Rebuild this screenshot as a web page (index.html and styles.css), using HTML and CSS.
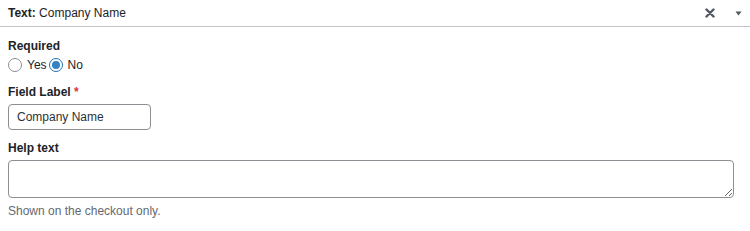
FILE: index.html
```html
<!DOCTYPE html>
<html lang="en">
<head>
    <meta charset="UTF-8">
    <title>Text field settings</title>
    <link rel="stylesheet" href="styles.css">
</head>
<body>
    <div class="field-panel">
        <div class="panel-header">
            <div class="panel-title"><strong>Text:</strong> Company Name</div>
            <div class="panel-actions">
                <span class="icon remove" title="Remove">
                    <svg width="10" height="10" viewBox="0 0 10 10"><path d="M1.5 1.5 L8.5 8.5 M8.5 1.5 L1.5 8.5" stroke="#50575e" stroke-width="2.4" stroke-linecap="round"/></svg>
                </span>
                <span class="icon toggle" title="Toggle">
                    <svg width="7" height="5" viewBox="0 0 7 5"><path d="M0.5 0.5 H6.5 L3.5 4.5 Z" fill="#50575e"/></svg>
                </span>
            </div>
        </div>

        <div class="panel-body">
            <div class="field-row">
                <div class="field-label">Required</div>
                <div class="radio-row">
                    <label class="radio"><input type="radio" name="required"> Yes</label>
                    <label class="radio"><input type="radio" name="required" checked> No</label>
                </div>
            </div>

            <div class="field-row">
                <label class="field-label" for="label-input">Field Label <span class="req">*</span></label>
                <input class="text-input" id="label-input" type="text" value="Company Name">
            </div>

            <div class="field-row">
                <label class="field-label" for="help-input">Help text</label>
                <textarea class="text-area" id="help-input"></textarea>
                <p class="description">Shown on the checkout only.</p>
            </div>
        </div>
    </div>
</body>
</html>
```

FILE: styles.css
```css
* {
    margin: 0;
    padding: 0;
    box-sizing: border-box;
}

body {
    font-family: "Liberation Sans", Arial, sans-serif;
    font-size: 12px;
    color: #1d2327;
    background: #fff;
}

.panel-header {
    display: flex;
    align-items: center;
    justify-content: space-between;
    height: 27px;
    padding: 0 8px;
    border-bottom: 1px solid #c3c4c7;
}

.panel-title {
    line-height: 16px;
}

.panel-actions {
    display: flex;
    align-items: center;
}

.icon {
    display: block;
    line-height: 0;
    cursor: pointer;
}

.icon.remove {
    margin-right: 20px;
}

.icon.toggle {
    margin-top: 1px;
}

.panel-body {
    padding: 11px 16px 0 8px;
}

.field-label {
    display: block;
    font-weight: bold;
    line-height: 16px;
}

.req {
    color: #d63638;
}

.radio-row {
    display: flex;
    align-items: center;
    margin-top: 3px;
    height: 16px;
}

.radio {
    display: flex;
    align-items: center;
    gap: 5px;
    margin-right: 2px;
    line-height: 16px;
}

.radio input {
    appearance: none;
    width: 14px;
    height: 14px;
    border: 1px solid #8c8f94;
    border-radius: 50%;
    background: #fff;
    display: flex;
    align-items: center;
    justify-content: center;
    margin: 0;
}

.radio input:checked {
    border-color: #2271b1;
}

.radio input:checked::before {
    content: "";
    width: 8px;
    height: 8px;
    border-radius: 50%;
    background: #3582c4;
}

.field-row + .field-row {
    margin-top: 11px;
}

.field-row:last-child {
    margin-top: 10px;
}

.text-input {
    display: block;
    width: 143px;
    height: 26px;
    margin-top: 4px;
    padding: 0 8px;
    border: 1px solid #8c8f94;
    border-radius: 4px;
    font-family: inherit;
    font-size: 12px;
    color: #2c3338;
}

.text-area {
    display: block;
    width: 100%;
    height: 38px;
    margin-top: 4px;
    padding: 4px 8px;
    border: 1px solid #8c8f94;
    border-radius: 4px;
    font-family: inherit;
    font-size: 12px;
}

.description {
    margin-top: 5px;
    line-height: 16px;
    color: #646970;
}
```
